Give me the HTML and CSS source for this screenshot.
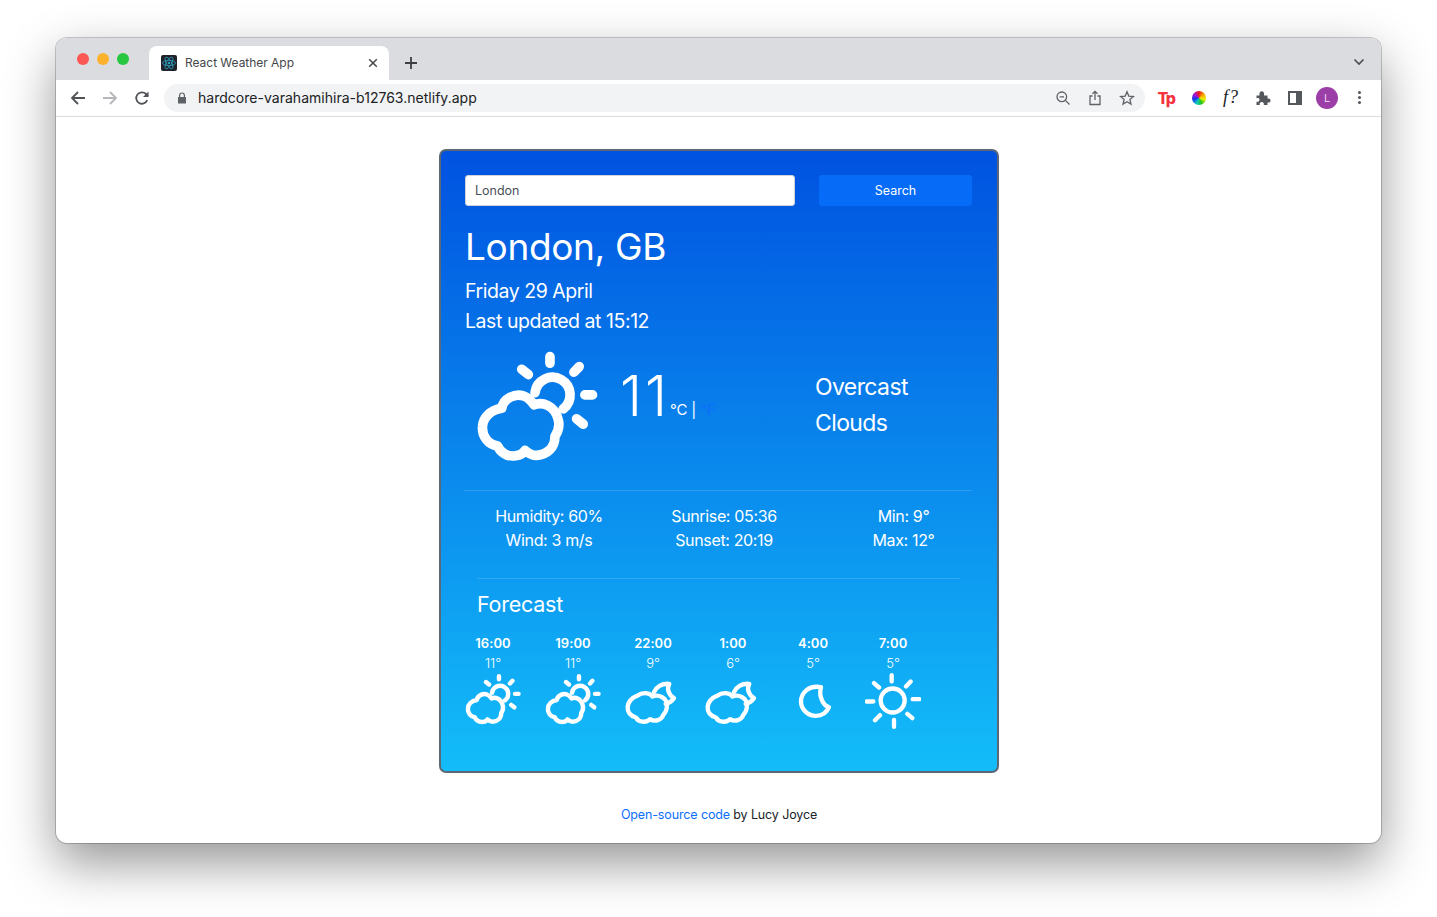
FILE: index.html
```html
<!DOCTYPE html>
<html lang="en">
<head>
<meta charset="utf-8">
<title>React Weather App</title>
<link rel="stylesheet" href="styles.css">
</head>
<body>
<svg class="defs" width="0" height="0" aria-hidden="true">
  <defs>
    <symbol id="cloud-sun" viewBox="48 30 366 370">
      <g class="big-stroke">
        <path d="M125 205C130 175 165 160 190 168C205 172 215 185 222 195C245 185 285 195 295 240C300 260 295 275 285 290C285 325 260 345 230 347C215 348 205 340 195 332C185 350 150 355 130 340C120 333 115 325 112 318C85 315 65 290 67 260C68 235 90 210 125 205Z"/>
        <path d="M225 158A53 53 0 1 1 310 207"/>
        <path d="M270 50V70M358 80L342 97M375 165H398M350 237L370 253M185 88L205 104"/>
      </g>
    </symbol>
    <symbol id="cloud-moon" viewBox="510 130 168 170">
      <g class="small-stroke">
        <path d="M548 197C560 187 585 187 592 200C612 192 635 205 636 225C636 240 630 250 625 255C620 270 600 278 585 268C575 280 550 278 543 263C525 258 517 245 518 232C519 215 532 203 548 197Z"/>
        <path d="M597 187C603 172 620 160 643 162C635 175 640 195 657 205C650 215 640 220 632 222"/>
      </g>
    </symbol>
    <symbol id="moon" viewBox="285 130 168 170">
      <g class="small-stroke">
        <path d="M393 172C355 165 333 190 333 215C333 240 355 258 378 258C395 258 410 248 417 232C400 228 385 200 393 172Z"/>
      </g>
    </symbol>
    <symbol id="sun" viewBox="525 130 168 170">
      <g class="small-stroke">
        <circle cx="608" cy="212" r="36"/>
        <path d="M605 136V155M668 208H688M612 270V291M530 215H550M648 170L662 155M552 160L567 173M555 271L570 256M652 252L667 265"/>
      </g>
    </symbol>
  </defs>
</svg>

<div class="window">
  <header class="tabstrip">
    <div class="lights">
      <span class="light light-red"></span>
      <span class="light light-yellow"></span>
      <span class="light light-green"></span>
    </div>
    <div class="tab">
      <span class="favicon">
        <svg viewBox="0 0 16 16" width="16" height="16">
          <g class="atom">
            <ellipse cx="8" cy="8" rx="6.5" ry="2.6"/>
            <ellipse cx="8" cy="8" rx="6.5" ry="2.6" transform="rotate(60 8 8)"/>
            <ellipse cx="8" cy="8" rx="6.5" ry="2.6" transform="rotate(120 8 8)"/>
          </g>
          <circle class="atom-core" cx="8" cy="8" r="1.3"/>
        </svg>
      </span>
      <span class="tab-title">React Weather App</span>
      <svg class="tab-close" viewBox="0 0 10 10" width="10" height="10"><path d="M1.2 1.2L8.8 8.8M8.8 1.2L1.2 8.8"/></svg>
    </div>
    <svg class="new-tab" viewBox="0 0 12 12" width="12" height="12"><path d="M6 0V12M0 6H12"/></svg>
    <svg class="tab-menu" viewBox="0 0 12 8" width="12" height="8"><path d="M1.5 1.5L6 6L10.5 1.5"/></svg>
  </header>

  <nav class="toolbar">
    <svg class="nav-icon" viewBox="0 0 16 16" width="16" height="16"><path d="M15 8H2M8 2L2 8L8 14"/></svg>
    <svg class="nav-icon nav-disabled" viewBox="0 0 16 16" width="16" height="16"><path d="M1 8H14M8 2L14 8L8 14"/></svg>
    <svg class="nav-icon" viewBox="0 0 16 16" width="16" height="16"><path d="M13.2 10.2A5.7 5.7 0 1 1 12 4L14 6"/><path class="solid" d="M14.5 1.5V7H9Z"/></svg>
    <div class="omnibox">
      <svg class="lock" viewBox="0 0 10 12" width="10" height="12"><path d="M1 5H2V3.4A3 3 0 0 1 8 3.4V5H9V11.5H1ZM3.2 5H6.8V3.4A1.8 1.8 0 0 0 3.2 3.4Z"/></svg>
      <span class="url">hardcore-varahamihira-b12763.netlify.app</span>
      <span class="omni-actions">
        <svg class="omni-icon" viewBox="0 0 16 16" width="16" height="16"><circle cx="6.8" cy="6.8" r="4.8"/><path d="M4.6 6.8H9M10.4 10.4L14.5 14.5"/></svg>
        <svg class="omni-icon" viewBox="0 0 16 16" width="16" height="16"><path d="M5.5 6H3V14.5H13V6H10.500M8 10V1.500M5.500 3.800L8 1.300L10.500 3.800"/></svg>
        <svg class="omni-icon" viewBox="0 0 16 16" width="16" height="16"><path d="M8 1.800L9.800 6.100L14.500 6.500L10.900 9.500L12 14.100L8 11.700L4 14.100L5.100 9.500L1.500 6.500L6.200 6.100Z"/></svg>
      </span>
    </div>
    <div class="extensions">
      <span class="ext ext-tp">Tp</span>
      <span class="ext"><span class="wheel"></span></span>
      <span class="ext ext-font">f?</span>
      <span class="ext">
        <svg class="puzzle" viewBox="0 0 16 16" width="16" height="16"><path d="M1.500 5.500H4.500C4 3 5 1.300 6.800 1.300C8.600 1.300 9.500 3 9 5.500H12.500V8.500C15 8 15.500 9.300 15.500 10.500C15.500 11.800 15 13 12.500 12.500V15H8.800C9.200 12.800 8 12 6.800 12C5.500 12 4.300 12.800 4.800 15H1.500V11.800C3.500 12 4.500 11.200 4.500 9.800C4.500 8.500 3.500 7.800 1.500 8.200Z"/></svg>
      </span>
      <span class="ext"><span class="panel-icon"><span class="panel-pane"></span></span></span>
      <span class="ext"><span class="avatar">L</span></span>
      <span class="ext"><span class="kebab"><i></i><i></i><i></i></span></span>
    </div>
  </nav>

  <main class="page">
    <section class="card">
      <form class="search">
        <input class="search-input" type="text" value="London">
        <button class="search-button" type="button">Search</button>
      </form>
      <h1 class="city">London, GB</h1>
      <p class="date">Friday 29 April</p>
      <p class="date">Last updated at 15:12</p>

      <div class="current">
        <svg class="current-icon"><use href="#cloud-sun"/></svg>
        <div class="temperature">
          <span class="temp-value">11</span>
          <span class="temp-units">°C | <a class="unit-link" href="#">°F</a></span>
        </div>
        <div class="description">Overcast<br>Clouds</div>
      </div>

      <div class="stats">
        <div class="stat stat-a">Humidity: 60%<br>Wind: 3 m/s</div>
        <div class="stat stat-b">Sunrise: 05:36<br>Sunset: 20:19</div>
        <div class="stat stat-c">Min: 9°<br>Max: 12°</div>
      </div>

      <div class="forecast">
        <h2 class="forecast-title">Forecast</h2>
        <div class="forecast-row">
          <div class="hour"><strong class="hour-time">16:00</strong><span class="hour-temp">11°</span><svg class="hour-icon"><use href="#cloud-sun"/></svg></div>
          <div class="hour"><strong class="hour-time">19:00</strong><span class="hour-temp">11°</span><svg class="hour-icon"><use href="#cloud-sun"/></svg></div>
          <div class="hour"><strong class="hour-time">22:00</strong><span class="hour-temp">9°</span><svg class="hour-icon"><use href="#cloud-moon"/></svg></div>
          <div class="hour"><strong class="hour-time">1:00</strong><span class="hour-temp">6°</span><svg class="hour-icon"><use href="#cloud-moon"/></svg></div>
          <div class="hour"><strong class="hour-time">4:00</strong><span class="hour-temp">5°</span><svg class="hour-icon"><use href="#moon"/></svg></div>
          <div class="hour"><strong class="hour-time">7:00</strong><span class="hour-temp">5°</span><svg class="hour-icon"><use href="#sun"/></svg></div>
        </div>
      </div>
    </section>
    <footer class="credit"><a class="credit-link" href="#">Open-source code</a> by Lucy Joyce</footer>
  </main>
</div>
</body>
</html>
```
FILE: styles.css
```css
* { box-sizing: border-box; }
html, body { height: 100%; }
body {
  margin: 0;
  padding: 38px 56px 0;
  background: #fff;
  overflow: hidden;
  font-family: Inter, "Liberation Sans", sans-serif;
  color: #212529;
}
.defs { display: block; height: 0; }
.big-stroke, .small-stroke { fill: none; stroke: #fff; stroke-linecap: round; stroke-linejoin: round; }
.big-stroke { stroke-width: 29; }
.small-stroke { stroke-width: 13; }

.window {
  width: 1325px;
  height: 805px;
  border-radius: 11px;
  background: #fff;
  box-shadow: 0 0 0 1px rgba(0,0,0,.2), 0 20px 50px 0 rgba(0,0,0,.42);
  overflow: hidden;
  display: flex;
  flex-direction: column;
}

.tabstrip {
  height: 42px;
  flex: none;
  background: #dadce0;
  display: flex;
  align-items: flex-end;
  padding-left: 21px;
}
.lights { display: flex; gap: 8px; align-self: flex-start; padding-top: 15px; width: 72px; }
.light { width: 12px; height: 12px; border-radius: 50%; }
.light-red { background: #fc5753; }
.light-yellow { background: #fdb22e; }
.light-green { background: #28c73f; }
.tab {
  width: 240px;
  height: 34px;
  background: #fff;
  border-radius: 8px 8px 0 0;
  display: flex;
  align-items: center;
  padding: 0 11px 0 12px;
}
.favicon { width: 16px; height: 16px; background: #20232a; border-radius: 2px; display: block; flex: none; }
.favicon svg { display: block; }
.atom { fill: none; stroke: #2f9fc0; stroke-width: .8; }
.atom-core { fill: #2f9fc0; }
.tab-title { font-size: 12px; color: #45474a; margin-left: 8px; flex: 1; white-space: nowrap; padding-bottom: 2px; letter-spacing: -.03px; }
.tab-close { fill: none; stroke: #45474a; stroke-width: 1.5; flex: none; }
.new-tab { fill: none; stroke: #3c4043; stroke-width: 1.800; margin: 0 0 11px 16px; flex: none; }
.tab-menu { fill: none; stroke: #4a4d51; stroke-width: 1.600; margin: 0 16px 14px auto; flex: none; }

.toolbar {
  height: 37px;
  flex: none;
  background: #fff;
  border-bottom: 1px solid #dadce0;
  display: flex;
  align-items: center;
  padding: 0 0 1px 14px;
}
.nav-icon { fill: none; stroke: #505357; stroke-width: 1.800; margin-right: 16px; flex: none; }
.nav-disabled { stroke: #b4b6b9; }
.solid { fill: #505357; stroke: none; }
.omnibox {
  width: 981px;
  height: 28px;
  margin-left: -2px;
  border-radius: 14px;
  background: #f1f3f4;
  display: flex;
  align-items: center;
  padding: 0 10px 0 13px;
  flex: none;
}
.lock { fill: #5f6368; fill-rule: evenodd; flex: none; }
.url { font-size: 14px; color: #202124; margin-left: 11px; white-space: nowrap; letter-spacing: .02px; }
.omni-actions { margin-left: auto; display: flex; gap: 16px; }
.omni-icon { fill: none; stroke: #5f6368; stroke-width: 1.300; display: block; }

.extensions { display: flex; margin-left: 6px; }
.ext { width: 32px; height: 28px; display: flex; align-items: center; justify-content: center; }
.ext-tp { font-size: 16px; font-weight: 800; color: #f5333f; letter-spacing: -1.500px; padding-right: 2px; }
.wheel {
  width: 14px; height: 14px; border-radius: 50%;
  background: conic-gradient(#f01818, #f5a400, #f0ee00, #1fc41f, #10c8c8, #1433e6, #a314d8, #f01818);
}
.ext-font { font-family: "Liberation Serif", serif; font-style: italic; font-weight: 400; font-size: 18px; letter-spacing: 1px; color: #202124; }
.puzzle { fill: #54585d; }
.panel-icon { width: 14px; height: 14px; border: 2px solid #54585d; display: flex; justify-content: flex-end; }
.panel-pane { width: 4px; background: #54585d; }
.avatar {
  width: 22px; height: 22px; border-radius: 50%;
  background: #9c3ea8; color: #e8d3ec; font-size: 11px;
  display: flex; align-items: center; justify-content: center;
}
.kebab { display: flex; flex-direction: column; gap: 2px; }
.kebab i { width: 3px; height: 3px; border-radius: 50%; background: #54585d; display: block; }

.page { flex: 1; display: flex; flex-direction: column; align-items: center; padding-left: 1px; }

.card {
  width: 560px;
  height: 624px;
  margin-top: 32px;
  border: 2px solid #5c6875;
  border-radius: 7px;
  padding: 24px 25px 0 24px;
  background: linear-gradient(180deg, #0052e0 0%, #13bdf9 100%);
  color: #fff;
  flex: none;
}
.search { display: flex; gap: 24px; }
.search-input {
  width: 330px; height: 31px;
  border: 1px solid #ced4da; border-radius: 3px;
  background: #fff;
  padding: 0 9px;
  font: 12.500px Inter, sans-serif;
  color: #495057;
}
.search-button {
  width: 153px; height: 31px;
  border: 0; border-radius: 3px;
  background: #066cf8; color: #fff;
  font: 12.500px Inter, sans-serif;
}
.city { font-size: 37px; font-weight: 400; line-height: 44px; margin: 19px 0 7px; white-space: nowrap; letter-spacing: -.35px; }
.date { font-size: 19.500px; line-height: 30px; margin: 0; font-weight: 400; letter-spacing: -.45px; }

.current { display: flex; margin-top: 14px; height: 123px; margin-left: 11px; }
.current-icon { width: 122px; height: 123px; flex: none; }
.temperature { width: 195px; margin-left: 22px; padding-top: 14px; display: flex; align-items: flex-start; flex: none; white-space: pre; }
.temp-value { font-size: 56px; line-height: 64px; font-weight: 300; letter-spacing: 3px; }
.temp-units { font-size: 15px; line-height: 18px; margin: 37px 0 0 0; font-weight: 400; letter-spacing: -.2px; }
.unit-link { color: #0d6efd; text-decoration: none; }
.description { font-size: 23px; line-height: 36px; font-weight: 400; padding-top: 19px; letter-spacing: -.6px; }

.stats {
  display: flex;
  margin: 17px 0 0 -1px;
  border-top: 1px solid rgba(255,255,255,.15);
  padding-top: 13px;
  font-size: 16px;
  line-height: 24px;
  font-weight: 400;
  height: 88px;
  text-align: center;
  letter-spacing: -.35px;
}
.stat { flex: none; }
.stat-a { width: 170px; }
.stat-b { width: 180px; }
.stat-c { width: 179px; }

.forecast { margin: 0 12px; border-top: 1px solid rgba(255,255,255,.15); padding-top: 11px; }
.forecast-title { font-size: 21.500px; line-height: 28px; font-weight: 400; margin: 0 0 15px; letter-spacing: -.25px; }
.forecast-row { display: flex; margin-left: -24px; }
.hour { width: 80px; display: flex; flex-direction: column; align-items: center; flex: none; }
.hour-time { font-size: 13px; line-height: 20px; font-weight: 600; letter-spacing: .05px; }
.hour-temp { font-size: 13px; line-height: 18px; font-weight: 300; margin-top: 1px; }
.hour-icon { width: 56px; height: 57px; display: block; margin-top: 1px; }

.credit { margin-top: 33px; font-size: 12.500px; line-height: 18px; color: #212529; letter-spacing: -.13px; }
.credit-link { color: #0d6efd; text-decoration: none; }
```
